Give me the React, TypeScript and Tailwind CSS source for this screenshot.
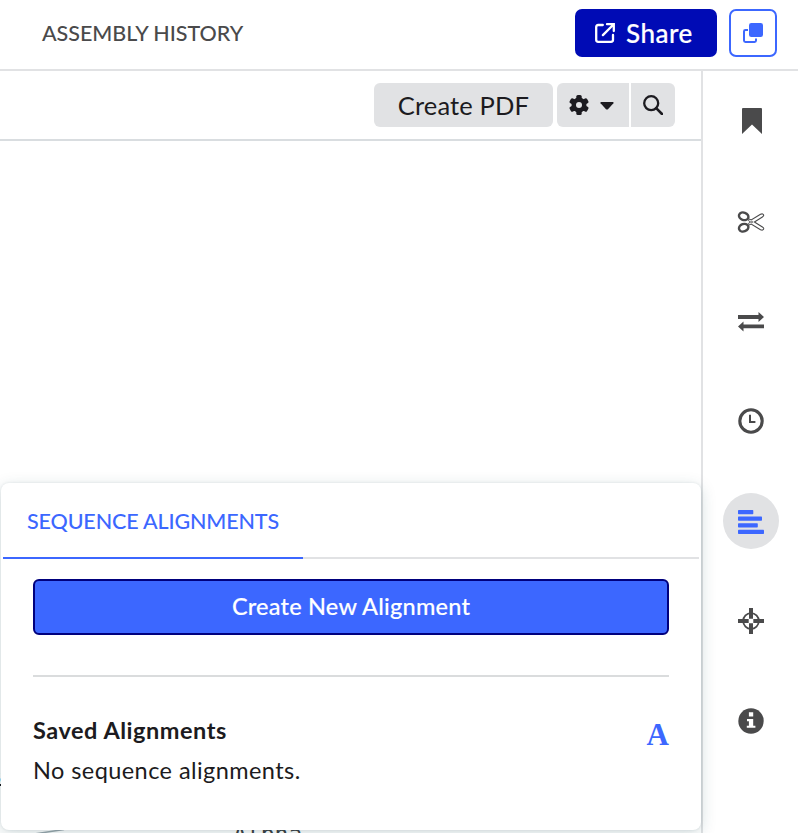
import type { ReactNode } from "react";

function ShareIcon() {
  return (
    <svg width="20" height="20" viewBox="0 0 20 20" fill="none" stroke="white" strokeWidth="2.3">
      <path d="M7.8 2H3.2Q1.2 2 1.2 4V16.8Q1.2 18.8 3.2 18.8H16Q18 18.8 18 16.8V12" strokeLinecap="round" />
      <path d="M12 1.2H18.8V8M18.5 1.5L7.9 12.1" strokeLinecap="round" />
    </svg>
  );
}

function CopyIcon() {
  return (
    <svg width="20" height="20" viewBox="0 0 20 20" fill="none">
      <path d="M5 7H2.4Q1 7 1 8.4V17.6Q1 19 2.4 19H11.6Q13 19 13 17.6V15.4" stroke="#3c67ff" strokeWidth="2" />
      <rect x="6" y="0" width="14" height="14" rx="2.3" fill="#3c67ff" />
    </svg>
  );
}

function GearIcon() {
  return (
    <svg width="20" height="20" viewBox="0 0 20 20">
      <g fill="#1c1b20">
        <rect x="7.3" y="0" width="5.4" height="20" rx="1.6" />
        <rect x="7.3" y="0" width="5.4" height="20" rx="1.6" transform="rotate(60 10 10)" />
        <rect x="7.3" y="0" width="5.4" height="20" rx="1.6" transform="rotate(120 10 10)" />
        <circle cx="10" cy="10" r="7.5" />
      </g>
      <circle cx="10" cy="10" r="3" fill="#e1e2e4" />
    </svg>
  );
}

function BookmarkIcon() {
  return (
    <svg className="ml-0.5" width="20" height="26" viewBox="0 0 20 26">
      <path d="M0 1Q0 0 1 0H19Q20 0 20 1V26L10 16.5L0 26Z" fill="#4a4a4b" />
    </svg>
  );
}

function ScissorsIcon() {
  return (
    <svg className="mt-0.5" width="28" height="22" viewBox="0 0 28 22" fill="none" stroke="#4a4a4b">
      <ellipse cx="6.7" cy="5.3" rx="4.8" ry="3.7" strokeWidth="2.4" transform="rotate(20 6.7 5.3)" />
      <ellipse cx="6.7" cy="16.7" rx="4.8" ry="3.7" strokeWidth="2.4" transform="rotate(-20 6.7 16.7)" />
      <path d="M10.8 7.6L14.2 9L23.5 3.3Q26 2.2 26.7 4.1Q26.9 5.1 25.4 6L17.4 11L25.4 16Q26.9 16.9 26.7 17.9Q26 19.8 23.5 18.7L14.2 13L10.8 14.4" strokeWidth="1.1" />
      <path d="M11.2 9.4L13.6 11L11.2 12.6" strokeWidth="1" />
      <circle cx="15" cy="11" r=".8" strokeWidth=".7" />
    </svg>
  );
}

function SwapIcon() {
  return (
    <svg className="mt-0.5" width="26" height="20" viewBox="0 0 26 20" fill="#4a4a4b">
      <path d="M0 3.1H20.5V.1L26 5L20.5 9.9V6.9H0ZM26 12.5H5.5V9.6L0 14.5L5.5 19.4V16.3H26Z" />
    </svg>
  );
}

function ClockIcon() {
  return (
    <svg width="26" height="26" viewBox="0 0 26 26" fill="none" stroke="#4a4a4b">
      <circle cx="13" cy="13" r="11.2" strokeWidth="3.1" />
      <path d="M12 6.7V14H17.4" strokeWidth="2" />
    </svg>
  );
}

function AlignIcon() {
  return (
    <svg className="mt-0.5" width="26" height="24" viewBox="0 0 26 24" fill="#3c67ff">
      <rect y="0" width="15.3" height="4.2" rx=".7" />
      <rect y="6.6" width="24" height="4.2" rx=".7" />
      <rect y="13.2" width="19.8" height="4.2" rx=".7" />
      <rect y="19.8" width="26" height="4.2" rx=".7" />
    </svg>
  );
}

function TargetIcon() {
  return (
    <svg width="26" height="26" viewBox="0 0 26 26" fill="none" stroke="#4a4a4b">
      <circle cx="13" cy="13" r="7.8" strokeWidth="1.8" />
      <path d="M13 0V10.7M13 15.3V26M0 13H10.7M15.3 13H26" strokeWidth="4" />
    </svg>
  );
}

function InfoIcon() {
  return (
    <svg width="26" height="26" viewBox="0 0 26 26">
      <circle cx="13" cy="13" r="12.7" fill="#4a4a4b" />
      <path d="M10.9 4.3H15.2V8.4H10.9ZM9 11H15.2V17.7H17.4V19.8H8.8V17.7H10.9V13.2H9Z" fill="white" />
    </svg>
  );
}

function RailItem({ active, children }: { active?: boolean; children: ReactNode }) {
  return (
    <button className={`flex size-14 shrink-0 items-center justify-center rounded-full ${active ? "bg-[#e1e2e4]" : ""}`}>
      {children}
    </button>
  );
}

export default function App() {
  return (
    <div className="flex h-[833px] w-[798px] flex-col overflow-hidden bg-white font-['Lato','Open_Sans',sans-serif] text-[#1c1b20]">
      <header className="flex h-[71px] shrink-0 items-start justify-between border-b-2 border-[#e1e2e4] pt-[9px] pr-[21px] pl-[42px]">
        <span className="mt-[9px] text-[21.5px] leading-[30px] font-medium tracking-[-0.03px] whitespace-nowrap text-[#4a4a4b]">ASSEMBLY HISTORY</span>
        <div className="flex gap-3">
          <button className="flex h-12 w-[142px] items-center rounded-[7px] bg-[#000bb5] pl-5 text-[26px] font-medium text-white">
            <ShareIcon />
            <span className="ml-[11px] leading-[30px] tracking-[0.5px] [-webkit-text-stroke:0.2px]">Share</span>
          </button>
          <button className="flex size-12 items-center justify-center rounded-[7px] border-2 border-[#3c67ff]">
            <CopyIcon />
          </button>
        </div>
      </header>

      <div className="flex h-[762px]">
        <main className="relative w-[701px] shrink-0">
          <div className="flex h-[70px] items-start justify-end border-b-2 border-[#d9dde0] pt-3 pr-[26px]">
            <button className="mr-1 flex h-11 w-[179px] items-center justify-center rounded-[6px] bg-[#e1e2e4] text-[25.5px] whitespace-nowrap">
              <span className="leading-[30px] tracking-[0.15px]">Create PDF</span>
            </button>
            <button className="mr-0.5 flex h-11 w-[72px] items-center rounded-l-[6px] bg-[#e1e2e4] pl-[11.5px]">
              <GearIcon />
              <svg className="mt-0.5 ml-[11.5px]" width="14" height="8" viewBox="0 0 14 8">
                <path d="M1 0H13Q14 .2 13.4 1.2L8 7.2Q7 8 6 7.2L.6 1.2Q0 .2 1 0Z" fill="#1c1b20" />
              </svg>
            </button>
            <button className="flex h-11 w-11 items-center justify-center rounded-r-[6px] bg-[#e1e2e4]">
              <svg width="20" height="20" viewBox="0 0 20 20" fill="none" stroke="#1c1b20">
                <circle cx="8.2" cy="8.2" r="7" strokeWidth="2.3" />
                <path d="M13.2 13.2L19 19" strokeWidth="2.6" strokeLinecap="round" />
              </svg>
            </button>
          </div>

          <span className="absolute top-[693px] -left-[10px] font-['DejaVu_Sans_Mono',monospace] text-[20px] leading-6 underline">s</span>
          <span className="absolute top-[749px] left-[233px] font-['DejaVu_Sans_Mono',monospace] text-[23px] leading-7 text-[#3d4143]">Alpha</span>
          <svg className="absolute top-[752px] left-0" width="70" height="10" viewBox="0 0 70 10">
            <path d="M34 11L64 6.5" stroke="#9ca8ae" strokeWidth="1.5" />
          </svg>

          <section className="absolute top-[412px] left-px z-10 h-[347px] w-[700px] rounded-[8px] bg-white shadow-[0_0_3px_rgba(16,50,60,0.10),0_4px_16px_rgba(16,70,80,0.18)]">
            <div className="mx-0.5 flex h-[76px] border-b-2 border-[#e1e2e4]">
              <div className="h-[76px] w-[300px] border-b-2 border-[#3c67ff] pt-[23px] pl-6">
                <span className="text-[21.5px] leading-[30px] font-medium tracking-[-0.13px] whitespace-nowrap text-[#3c67ff]">SEQUENCE ALIGNMENTS</span>
              </div>
            </div>
            <div className="px-8 pt-5">
              <button className="flex h-14 w-full items-center justify-center rounded-[6px] border-2 border-[#00007d] bg-[#3c67ff] pb-[3px] text-[23.5px] font-medium text-white">
                <span className="leading-[30px] tracking-[0.22px] [-webkit-text-stroke:0.15px]">Create New Alignment</span>
              </button>
              <div className="mt-10 h-0.5 bg-[#dadcdd]" />
              <div className="mt-[38px] flex items-start justify-between">
                <h2 className="text-[23.5px] leading-[30px] font-bold tracking-[0.53px]">Saved Alignments</h2>
                <span className="mt-[5px] font-['Liberation_Serif',serif] text-[31px] leading-[30px] font-bold text-[#3c67ff]">A</span>
              </div>
              <p className="mt-[5px] text-[23.5px] leading-[30px] tracking-[0.43px]">No sequence alignments.</p>
            </div>
          </section>
        </main>

        <aside className="flex w-[97px] shrink-0 flex-col gap-11 border-l-2 border-[#e1e2e4] pt-[22px] pl-5">
          <RailItem><BookmarkIcon /></RailItem>
          <RailItem><ScissorsIcon /></RailItem>
          <RailItem><SwapIcon /></RailItem>
          <RailItem><ClockIcon /></RailItem>
          <RailItem active><AlignIcon /></RailItem>
          <RailItem><TargetIcon /></RailItem>
          <RailItem><InfoIcon /></RailItem>
        </aside>
      </div>
    </div>
  );
}
